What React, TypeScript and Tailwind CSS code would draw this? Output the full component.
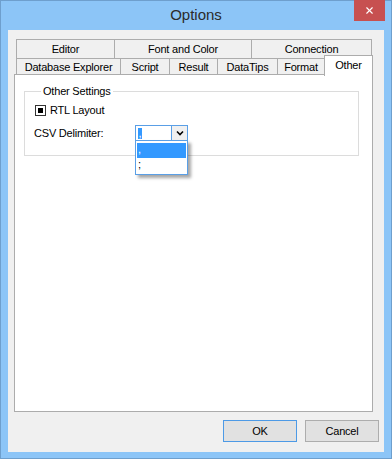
import { X } from "lucide-react";

const row1 = [
  { label: "Editor", w: "w-[99px]" },
  { label: "Font and Color", w: "w-[138px]" },
  { label: "Connection", w: "w-[121px]" },
];

const row2 = [
  { label: "Database Explorer", w: "w-[105px]" },
  { label: "Script", w: "w-[50px]" },
  { label: "Result", w: "w-[49px]" },
  { label: "DataTips", w: "w-[61px]" },
  { label: "Format", w: "w-[48px]" },
];

const ui = { fontFamily: '"Liberation Sans", Arial, sans-serif' };

export default function App() {
  return (
    <div
      className="w-[392px] h-[459px] bg-[#8cc5f7] border border-[#6e9fcd] flex flex-col text-[11px] text-black tracking-[-0.2px]"
      style={ui}
    >
      {/* title bar */}
      <div className="relative h-[29px] flex items-center justify-center">
        <span className="text-[15px] text-[#2b2b2b] tracking-normal -mt-[1px]">Options</span>
        <button className="absolute right-[6px] top-[-1px] w-[31px] h-[21px] bg-[#c75050] flex items-center justify-center">
          <X size={11} strokeWidth={2.5} className="text-white" />
        </button>
      </div>

      {/* client area */}
      <div className="ml-[7px] w-[376px] h-[422px] bg-[#f0f0f0] flex flex-col pl-[6px] pt-[9px]">
        <div className="pl-[2px] flex flex-col">
          <div className="flex h-[19px]">
            {row1.map((t, i) => (
              <div
                key={t.label}
                className={`${t.w} ${i > 0 ? "-ml-px" : ""} h-full border-t border-l border-r border-[#acacac] flex items-center justify-center pt-[1px]`}
              >
                {t.label}
              </div>
            ))}
          </div>
          <div className="flex items-end h-[17px] -mb-px relative z-10">
            {row2.map((t, i) => (
              <div
                key={t.label}
                className={`${t.w} ${i > 0 ? "-ml-px" : ""} h-[17px] border-t border-l border-r border-[#acacac] flex items-center justify-center`}
              >
                {t.label}
              </div>
            ))}
            <div className="w-[49px] -ml-px h-[21px] bg-white border-t border-l border-r border-[#acacac] flex justify-center pt-[1px] self-end -mb-px">
              Other
            </div>
          </div>
        </div>

        {/* tab page */}
        <div className="w-[359px] h-[338px] bg-white border border-[#acacac] pl-[9px] pt-[10px]">
          <fieldset className="w-[335px] h-[71px] border border-[#dcdcdc] pl-[10px]">
            <legend className="ml-[6px] px-[2px] leading-[13px]">Other Settings</legend>
            <div className="flex items-center gap-[4px] mt-[6px] h-[13px]">
              <div className="w-[11px] h-[11px] border border-[#333333] flex items-center justify-center">
                <div className="w-[5px] h-[5px] bg-black" />
              </div>
              <span>RTL Layout</span>
            </div>
            <div className="flex items-center mt-[8px] h-[16px] -ml-px">
              <span className="w-[101px]">CSV Delimiter:</span>
              <div className="relative">
                <div className="w-[53px] h-[16px] border border-[#5a9fe6] bg-white flex">
                  <div className="flex-1 flex items-center pl-[2px]">
                    <span className="bg-[#3399ff] text-white w-[4px] h-[11px] leading-[10px] flex justify-center">,</span>
                  </div>
                  <div className="w-[16px] border-l border-[#5a9fe6] flex items-center justify-center bg-[#f0f0f0]">
                    <svg width="8" height="6" viewBox="0 0 8 6">
                      <path d="M1 1.5 L4 4.5 L7 1.5" stroke="#000" strokeWidth="1.6" fill="none" />
                    </svg>
                  </div>
                </div>
                <div className="absolute left-0 top-[15px] w-[53px] h-[35px] bg-white border border-[#5a9fe6] shadow-[3px_3px_3px_rgba(0,0,0,0.35)] z-20 flex flex-col pt-[2px] px-px">
                  <div className="h-[15px] bg-[#3399ff] text-white pl-[1px] leading-[12px]">,</div>
                  <div className="h-[15px] pl-[1px] leading-[12px]">;</div>
                </div>
              </div>
            </div>
          </fieldset>
        </div>

        {/* buttons */}
        <div className="flex justify-end gap-[8px] mt-[8px] pr-[5px]">
          <button className="w-[74px] h-[22px] bg-[#e1e1e1] border border-[#4d9ae6] flex items-center justify-center">
            OK
          </button>
          <button className="w-[74px] h-[22px] bg-[#e1e1e1] border border-[#adadad] flex items-center justify-center">
            Cancel
          </button>
        </div>
      </div>
    </div>
  );
}
